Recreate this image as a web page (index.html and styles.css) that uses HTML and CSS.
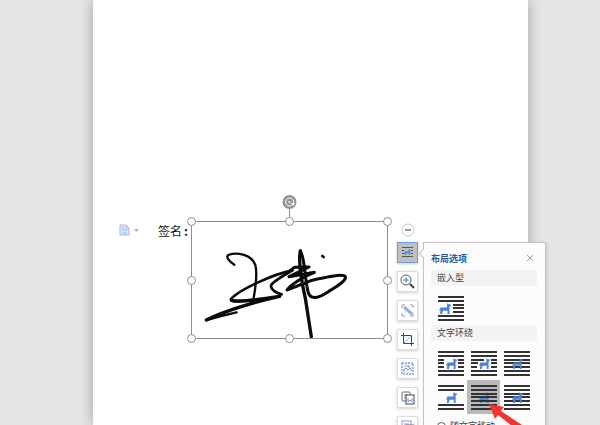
FILE: index.html
```
<!DOCTYPE html>
<html lang="zh-CN">

<head>
    <meta charset="UTF-8" />
    <meta name="viewport" content="width=device-width, initial-scale=1.0" />
    <title>签名</title>
    <link rel="stylesheet" href="styles.css">
</head>

<body>
    <!-- Shared shapes -->
    <svg class="defs" aria-hidden="true">
        <symbol id="dog" viewBox="0 0 12 12" preserveAspectRatio="none">
            <path d="M8 0L9 1L12 1.500L11.500 3.500H10.500V12H8.500V8.500H4L3 12H1L1.500 8L0 9L1.500 5H8Z" />
        </symbol>
    </svg>

    <div class="workspace">
        <main class="page">
            <div class="paragraph">
                <button class="paragraph-mark" aria-label="段落布局">
                    <svg width="20" height="12" viewBox="0 0 20 12">
                        <path d="M1 1H7L10 4V11H1Z" fill="#dce8f8" stroke="#9dbbe6" />
                        <path d="M7 1V4H10M3 4H5M3 6H8M3 9H8" fill="none" stroke="#9dbbe6" />
                        <path d="M15 5H20L17.500 8Z" fill="#b5b5b5" />
                    </svg>
                </button>
                <span class="label">签名<span class="colon">:</span></span>

                <!-- Selected signature -->
                <div class="frame">
                    <svg class="signature" viewBox="18 108 591 354">
                        <g fill="none" stroke="#0b0b0b" stroke-width="10" stroke-linecap="round" stroke-linejoin="round">
                            <path stroke-width="7" d="M148 239C132 230 122 216 130 210C152 202 198 205 211 240C219 270 211 310 205 345" />
                            <path stroke-width="8" d="M322 256C260 268 158 318 138 342C134 352 160 350 205 346" />
                            <path d="M140 346C165 352 240 341 284 334C220 348 120 376 64 405" />
                            <path stroke-width="7" d="M64 405L108 393L155 382" />
                            <path stroke-width="8" d="M322 256C290 275 262 290 258 302C257 314 275 325 290 328" />
                            <path d="M346 198C340 225 350 290 361 340L379 455" />
                            <path stroke-width="9" d="M346 198C360 220 358 270 368 315C372 345 395 343 430 320C460 301 485 286 481 275C475 264 420 277 380 286L306 315C315 300 355 275 388 262L312 275L372 246L328 247L305 265" />
                            <path stroke-width="8" d="M412 213L416 216" />
                        </g>
                    </svg>
                    <svg class="handles" viewBox="0 0 208 148" aria-hidden="true">
                        <g fill="#fff" stroke="#8f8f8f">
                            <path d="M103.500 12V25" />
                            <rect x="5.500" y="24.500" width="196" height="117" fill="none" />
                            <circle cx="5.500" cy="24.500" r="4" />
                            <circle cx="103.500" cy="24.500" r="4" />
                            <circle cx="201.500" cy="24.500" r="4" />
                            <circle cx="5.500" cy="83.500" r="4" />
                            <circle cx="201.500" cy="83.500" r="4" />
                            <circle cx="5.500" cy="141.500" r="4" />
                            <circle cx="103.500" cy="141.500" r="4" />
                            <circle cx="201.500" cy="141.500" r="4" />
                        </g>
                        <circle cx="103.500" cy="5" r="7" fill="#949494" />
                        <path d="M105.500 8.500A4 4 0 1 1 107.500 6" fill="none" stroke="#fff" />
                        <path d="M104.500 6H109L107.500 9Z" fill="#fff" />
                        <circle cx="103.500" cy="5" r="1" fill="#fff" />
                    </svg>
                </div>

                <!-- Quick tools -->
                <div class="toolbar">
                    <button class="collapse" aria-label="收起">
                        <svg width="14" height="14" viewBox="0 0 14 14">
                            <circle cx="7" cy="7" r="6" fill="#fff" stroke="#c6c6c6" />
                            <path d="M4 7H10" stroke="#777" stroke-width="1.500" />
                        </svg>
                    </button>
                    <button class="tool active" aria-label="布局选项">
                        <svg width="15" height="15" viewBox="0 0 15 15">
                            <path d="M2 2.500H13M2 5.500H4M11 5.500H13M2 8.500H4M11 8.500H13M2 11.500H13" stroke="#555" />
                            <use href="#dog" x="4" y="4" width="7" height="6" fill="#4a83dc" />
                        </svg>
                    </button>
                    <button class="tool" aria-label="放大">
                        <svg width="15" height="15" viewBox="0 0 15 15">
                            <circle cx="6" cy="6" r="5" fill="none" stroke="#555" />
                            <path d="M10 10L14 14" stroke="#444" stroke-width="2" />
                            <path d="M3.500 6H8.500M6 3.500V8.500" stroke="#5b93ea" stroke-width="1.500" />
                        </svg>
                    </button>
                    <button class="tool" aria-label="美化">
                        <svg width="15" height="15" viewBox="0 0 15 15">
                            <path d="M2 5V2H5M10 2H13V5M2 10V13H5M10 13H13V10" fill="none" stroke="#999" />
                            <path d="M4 4L12 11" stroke="#8db2ec" stroke-width="3" />
                            <path d="M5 8V10M8 4H10" stroke="#c4d6f3" />
                        </svg>
                    </button>
                    <button class="tool" aria-label="裁剪">
                        <svg width="15" height="15" viewBox="0 0 15 15">
                            <path d="M3.500 1V11.500H14M1 3.500H11.500V14" fill="none" stroke="#444" />
                            <path d="M4 11L13 2" stroke="#5b93ea" stroke-dasharray="2 1" />
                        </svg>
                    </button>
                    <button class="tool" aria-label="抠图">
                        <svg width="15" height="15" viewBox="0 0 15 15">
                            <rect x="2" y="2" width="11" height="11" fill="#edf3fc" stroke="#7fa9ec" stroke-width="1.500" stroke-dasharray="2 1" />
                            <path d="M4 11V9L6 7L8 9L10 7L12 10M5 5H9V7" fill="none" stroke="#8d99ab" />
                        </svg>
                    </button>
                    <button class="tool" aria-label="转换">
                        <svg width="15" height="15" viewBox="0 0 15 15">
                            <path d="M6 11H3Q2 11 2 10V3Q2 2 3 2H9Q10 2 10 3V5M4 5H8M4 8H6" fill="none" stroke="#666" />
                            <rect x="6" y="5" width="8" height="9" fill="#fff" stroke="#444" />
                            <path d="M8 8V12L10 10L12 12V8" fill="none" stroke="#5b93ea" />
                        </svg>
                    </button>
                    <button class="tool" aria-label="更多">
                        <svg width="15" height="15" viewBox="0 0 15 15">
                            <rect x="2" y="2" width="9" height="9" fill="#fff" stroke="#6a9cec" />
                            <path d="M4 5H9" stroke="#999" />
                            <rect x="6" y="6" width="8" height="8" fill="#fff" stroke="#777" />
                        </svg>
                    </button>

                    <!-- Layout options popup -->
                    <section class="panel">
                        <header class="panel-head">
                            <h1>布局选项</h1>
                            <button class="close" aria-label="关闭">
                                <svg width="8" height="8" viewBox="0 0 8 8">
                                    <path d="M1 1L7 7M7 1L1 7" stroke="#999" />
                                </svg>
                            </button>
                        </header>
                        <h2>嵌入型</h2>
                        <div class="options">
                            <button class="option" aria-label="嵌入型">
                                <svg width="26" height="26" viewBox="0 0 26 26">
                                    <path d="M0 2H26M0 6H26M15 10H26M15 13H26M15 17H26M0 21H26M0 25H26" />
                                    <use href="#dog" x="1" y="8" width="12" height="11" />
                                </svg>
                            </button>
                        </div>
                        <h2>文字环绕</h2>
                        <div class="options">
                            <button class="option" aria-label="四周型">
                                <svg width="26" height="26" viewBox="0 0 26 26">
                                    <path d="M0 2H26M0 6H26M0 10H6M20 10H26M0 13H6M20 13H26M0 17H6M20 17H26M0 21H26M0 25H26" />
                                    <use href="#dog" x="8" y="8" width="11" height="11" />
                                </svg>
                            </button>
                            <button class="option" aria-label="紧密型">
                                <svg width="26" height="26" viewBox="0 0 26 26">
                                    <path d="M0 2H26M0 6H26M0 10H13M20 10H26M0 13H7M20 13H26M0 17H6M20 17H26M0 21H26M0 25H26" />
                                    <use href="#dog" x="8" y="8" width="11" height="11" />
                                </svg>
                            </button>
                            <button class="option" aria-label="穿越型">
                                <svg width="26" height="26" viewBox="0 0 26 26">
                                    <path d="M0 2H26M0 6H26M0 10H26M0 13H26M0 17H26M0 21H26M0 25H26" />
                                    <use href="#dog" x="8" y="8" width="11" height="11" opacity="0.9" />
                                </svg>
                            </button>
                            <button class="option" aria-label="上下型">
                                <svg width="26" height="26" viewBox="0 0 26 26">
                                    <path d="M0 2H26M0 6H26M0 21H26M0 25H26" />
                                    <use href="#dog" x="8" y="8" width="11" height="11" />
                                </svg>
                            </button>
                            <button class="option selected" aria-label="衬于文字下方">
                                <svg width="26" height="26" viewBox="0 0 26 26">
                                    <use href="#dog" x="8" y="8" width="11" height="11" />
                                    <path d="M0 2H26M0 6H26M0 10H26M0 13H26M0 17H26M0 21H26M0 25H26" />
                                </svg>
                            </button>
                            <button class="option" aria-label="浮于文字上方">
                                <svg width="26" height="26" viewBox="0 0 26 26">
                                    <path d="M0 2H26M0 6H26M0 10H26M0 13H26M0 17H26M0 21H26M0 25H26" />
                                    <use href="#dog" x="8" y="8" width="11" height="11" />
                                </svg>
                            </button>
                        </div>
                        <label class="move"><input type="radio" name="move">随文字移动</label>
                        <svg class="pointer" viewBox="0 0 42 28" aria-hidden="true">
                            <path d="M0 0L15 3L12 7L42 27L36 32L9 11L6 15Z" fill="#f23430" />
                        </svg>
                    </section>
                </div>
            </div>
        </main>
    </div>
</body>

</html>
```
FILE: styles.css
```
* {
    box-sizing: border-box;
}

body {
    margin: 0;
    font-family: "Liberation Sans", "Noto Sans CJK SC", sans-serif;
    background-color: #e6e6e6;
    overflow: hidden;
}

button {
    display: flex;
    align-items: center;
    justify-content: center;
    padding: 0;
    border: none;
    background: none;
    cursor: pointer;
}

.defs {
    display: none;
}

.workspace {
    min-height: 100vh;
    display: flex;
    padding: 0 72px 0 93px;
}

.page {
    flex: 1;
    height: 100vh;
    padding: 221px 0 0 26px;
    background: white;
    box-shadow: 0 0 14px rgba(0, 0, 0, 0.3);
}

.paragraph {
    display: flex;
    align-items: flex-start;
}

.paragraph-mark {
    width: 20px;
    height: 18px;
    margin-right: 19px;
}

.label {
    width: 33px;
    font-family: "Noto Sans CJK SC", sans-serif;
    font-size: 12px;
    line-height: 20px;
    color: #111;
    white-space: nowrap;
}

.colon {
    margin-left: 2px;
    font-weight: bold;
}

.frame {
    position: relative;
    width: 197px;
    height: 118px;
}

.signature {
    display: block;
    width: 100%;
}

/* handles hang over the edges of the frame */
.handles {
    position: absolute;
    left: -5px;
    top: -24px;
    width: 208px;
    height: 148px;
    overflow: visible;
}

.toolbar {
    position: relative;
    display: flex;
    flex-direction: column;
    align-items: center;
    gap: 8px;
    margin-left: 9px;
    padding-top: 2px;
}

.collapse {
    width: 14px;
    height: 14px;
    margin-bottom: -3px;
}

.tool {
    width: 21px;
    height: 21px;
    background: white;
    border: 1px solid #ddd;
    box-shadow: 0 1px 3px rgba(0, 0, 0, 0.2);
}

.tool.active {
    background: #bfbfbf;
    border-color: #6b9be0;
}

/* Popup */
.panel {
    position: absolute;
    left: 26px;
    top: 21px;
    width: 123px;
    padding: 8px 8px 8px 7px;
    background: #fcfcfc;
    border: 1px solid #c4c4c4;
    box-shadow: 1px 1px 3px rgba(0, 0, 0, 0.15);
}

.panel::before {
    content: "";
    position: absolute;
    left: -4px;
    top: 7px;
    width: 6px;
    height: 6px;
    background: #fcfcfc;
    border: solid #c4c4c4;
    border-width: 0 0 1px 1px;
    transform: rotate(45deg);
}

.panel-head {
    display: flex;
    align-items: center;
    justify-content: space-between;
    height: 14px;
    margin-bottom: 5px;
}

.panel h1 {
    margin: 0;
    font-size: 9px;
    font-weight: bold;
    color: #2b579a;
}

.close {
    width: 14px;
    height: 14px;
}

.panel h2 {
    margin: 0;
    padding-left: 6px;
    font-size: 9px;
    font-weight: normal;
    line-height: 16px;
    color: #444;
    background: #f3f3f3;
}

.options {
    display: grid;
    grid-template-columns: repeat(3, 33px);
    grid-auto-rows: 34px;
    padding: 5px 3px 0;
}

.option path {
    stroke: #333;
    stroke-width: 2;
}

.option use {
    fill: #4a83dc;
}

#dog path {
    stroke: none;
}

.option.selected {
    background: #b9b9b9;
}

.move {
    display: flex;
    align-items: center;
    gap: 4px;
    height: 14px;
    margin-top: 5px;
    padding-left: 6px;
    font-size: 9px;
    line-height: 14px;
    color: #444;
}

.move input {
    appearance: none;
    width: 9px;
    height: 9px;
    margin: 0;
    border: 1px solid #555;
    border-radius: 50%;
    background: radial-gradient(#555 1px, white 2px);
}

/* red arrow over the chosen option */
.pointer {
    position: absolute;
    left: 65px;
    top: 161px;
    width: 42px;
    height: 28px;
    overflow: visible;
}
```
